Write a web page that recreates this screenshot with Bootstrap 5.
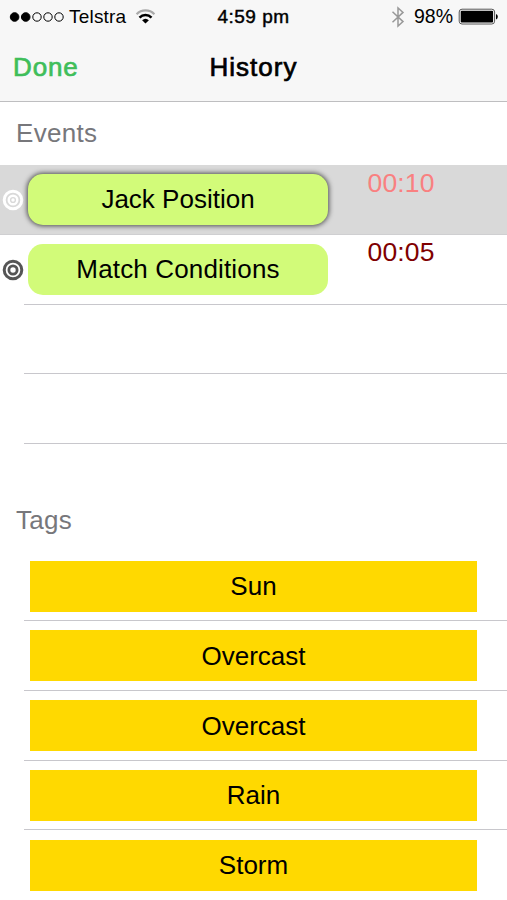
<!DOCTYPE html>
<html lang="en">
<head>
<meta charset="utf-8">
<meta name="viewport" content="width=device-width, initial-scale=1">
<title>History</title>
<link href="https://cdn.jsdelivr.net/npm/bootstrap@5.3.0/dist/css/bootstrap.min.css" rel="stylesheet">
<style>
body { font-family: "Liberation Sans", Arial, sans-serif; font-size: 26px; line-height: 30px; letter-spacing: 0; color: #000; background: #fff; height: 900px; overflow: hidden; }
.top-area { height: 102px; background: #f7f7f7; border-bottom: 1px solid #bebec0; }
.status { height: 33px; font-size: 19px; line-height: 33px; padding: 0 9px 0 9px; }
.carrier { letter-spacing: .2px; }
.percent { font-size: 19.5px; margin-left: 9px; margin-right: 5px; }
.side { flex: 1 1 0; }
.semi { -webkit-text-stroke: .45px currentColor; }
.clock { letter-spacing: .5px; }
.title-bar { height: 68px; padding: 0 13px; }
.title-bar .semi { -webkit-text-stroke-width: .7px; letter-spacing: .85px; }
.title-bar .page-title { letter-spacing: 1px; }
.done { color: #3fbe5a; }
.heading { color: #77777b; padding-left: 16px; letter-spacing: .3px; }
.events-heading { height: 63px; padding-bottom: 1px; }
.tags-heading { height: 107.3px; padding-top: 45px; }
.line-row { height: 69.75px; }
.line-row::after { content: ""; position: absolute; left: 24px; right: 0; bottom: 0; height: 1px; background: #c8c7cc; }
.tag-list .line-row:last-child::after { display: none; }
.selected { background: #d9d9d9; }
.selected::after { left: 0; background: #cfcfd1; }
.target { margin-left: 2px; width: 22px; height: 22px; }
.event-pill { margin-left: 4px; width: 300px; height: 51px; border-radius: 15px; background: #d2fb79; padding-bottom: 1px; }
.conditions { letter-spacing: .15px; }
.selected .event-pill { box-shadow: 0 0 5px 1px rgba(0,0,0,.65); }
.time { margin-left: 39.5px; padding-top: 2.5px; font-size: 26.5px; letter-spacing: .15px; }
.tag-block { margin: 0 30px; height: 51px; background: #ffd900; }
.red-soft { color: #f98080; }
.red-dark { color: #800000; }
</style>
<script src="https://cdn.jsdelivr.net/npm/bootstrap@5.3.0/dist/js/bootstrap.bundle.min.js"></script>
</head>
<body>
<header class="top-area">
  <div class="status d-flex align-items-center">
    <div class="side d-flex align-items-center">
      <svg width="56" height="12" viewBox="0 0 56 12"><g stroke="#000" stroke-width="1"><circle cx="5.6" cy="6" r="4.3"/><circle cx="16.7" cy="6" r="4.3"/><g fill="none"><circle cx="28" cy="6" r="4.2"/><circle cx="39" cy="6" r="4.2"/><circle cx="50" cy="6" r="4.2"/></g></g></svg>
      <span class="ms-1 carrier">Telstra</span>
      <svg class="ms-2" width="22" height="16" viewBox="0 0 22 16" fill="none" stroke-width="2.5"><path d="M2.6 5.2A12.3 12.3 0 0 1 20.4 5.2" stroke="#aaa" stroke-width="2.2"/><path d="M5.5 8.6A8.4 8.4 0 0 1 17.5 8.6" stroke="#000"/><path d="M11.5 14.5L8.1 11.3A5 5 0 0 1 14.9 11.3Z" fill="#000"/></svg>
    </div>
    <span class="semi clock">4:59 pm</span>
    <div class="side d-flex align-items-center justify-content-end">
      <svg width="14" height="22" viewBox="0 0 14 22" fill="none" stroke="#999" stroke-width="1.5"><path d="M1.5 5.7L12 15.6L7 20V2L12 6.4L1.5 16.3"/></svg>
      <span class="percent">98%</span>
      <svg width="40" height="18" viewBox="0 0 40 18"><rect x="1.2" y="1.2" width="35.4" height="14.8" rx="2.8" fill="#fff" stroke="#555"/><rect x="2.7" y="2.7" width="32.4" height="11.8" rx="1"/><path d="M38 6Q39.8 6.7 39.8 8.7T38 11.4Z"/></svg>
    </div>
  </div>
  <nav class="title-bar d-flex align-items-center">
    <div class="side done semi">Done</div>
    <div class="semi page-title">History</div>
    <div class="side"></div>
  </nav>
</header>
<main>
  <section>
    <div class="heading events-heading d-flex align-items-center">Events</div>
    <div class="line-row selected position-relative d-flex align-items-center">
      <svg class="target flex-shrink-0" viewBox="0 0 22 22" fill="none" stroke="#fff"><circle cx="11" cy="11" r="8.8" stroke-width="3"/><circle cx="11" cy="11" r="4.3" stroke-width="2.4"/><circle cx="11" cy="11" r="1.7" fill="#fff" stroke="none"/></svg>
      <div class="event-pill d-flex align-items-center justify-content-center">Jack Position</div>
      <div class="time red-soft align-self-start">00:10</div>
    </div>
    <div class="line-row position-relative d-flex align-items-center">
      <svg class="target flex-shrink-0" viewBox="0 0 22 22" fill="none" stroke="#555"><circle cx="11" cy="11" r="8.8" stroke-width="3"/><circle cx="11" cy="11" r="4.1" stroke-width="2.8"/></svg>
      <div class="event-pill conditions d-flex align-items-center justify-content-center">Match Conditions</div>
      <div class="time red-dark align-self-start">00:05</div>
    </div>
    <div class="line-row position-relative"></div>
    <div class="line-row position-relative"></div>
  </section>
  <section class="tag-list">
    <div class="heading tags-heading d-flex align-items-center">Tags</div>
    <div class="line-row position-relative d-flex align-items-center"><div class="tag-block flex-grow-1 d-flex align-items-center justify-content-center">Sun</div></div>
    <div class="line-row position-relative d-flex align-items-center"><div class="tag-block flex-grow-1 d-flex align-items-center justify-content-center">Overcast</div></div>
    <div class="line-row position-relative d-flex align-items-center"><div class="tag-block flex-grow-1 d-flex align-items-center justify-content-center">Overcast</div></div>
    <div class="line-row position-relative d-flex align-items-center"><div class="tag-block flex-grow-1 d-flex align-items-center justify-content-center">Rain</div></div>
    <div class="line-row position-relative d-flex align-items-center"><div class="tag-block flex-grow-1 d-flex align-items-center justify-content-center">Storm</div></div>
  </section>
</main>
</body>
</html>
